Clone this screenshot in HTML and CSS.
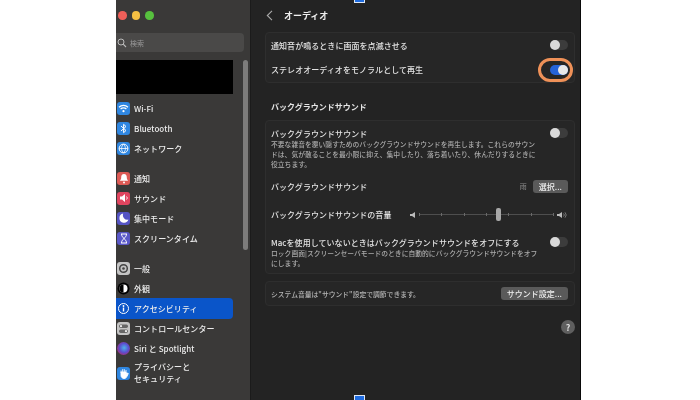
FILE: index.html
```html
<!DOCTYPE html>
<html lang="ja">
<head>
<meta charset="utf-8">
<title>オーディオ</title>
<link rel="stylesheet" href="styles.css">
</head>
<body>
<div class="window">
  <aside class="sidebar">
    <div class="lights"><span class="light red"></span><span class="light yellow"></span><span class="light green"></span></div>
    <div class="search">
      <svg class="search-icon" width="10" height="10" viewBox="0 0 10 10"><circle cx="4" cy="4" r="3" fill="none" stroke="#bbb" stroke-width="1"/><path d="M6.2 6.2L9 9" stroke="#bbb" stroke-width="1.1"/></svg>
      <span>検索</span>
    </div>
    <div class="account"></div>
    <div class="scroll-thumb"></div>
    <nav class="nav">
      <div class="group">
        <div class="item"><span class="icon blue"><svg width="11" height="9" viewBox="0 0 11 9"><path d="M1 3.2a6.4 6.4 0 0 1 9 0M2.6 5a4.1 4.1 0 0 1 5.8 0" fill="none" stroke="#fff" stroke-width="1.2"/><circle cx="5.5" cy="7.2" r="1.1" fill="#fff"/></svg></span>Wi-Fi</div>
        <div class="item"><span class="icon blue"><svg width="8" height="11" viewBox="0 0 8 11"><path d="M1 3l5 4.500-2.400 2.200V1.300L6 3.500 1 8" fill="none" stroke="#fff" stroke-width="1"/></svg></span>Bluetooth</div>
        <div class="item"><span class="icon blue"><svg width="11" height="11" viewBox="0 0 11 11"><circle cx="5.500" cy="5.500" r="4.400" fill="none" stroke="#fff" stroke-width="1"/><path d="M1.200 5.500h8.600M5.500 1.100c-2.600 2.600-2.600 6.200 0 8.800M5.500 1.100c2.600 2.600 2.600 6.200 0 8.800" fill="none" stroke="#fff" stroke-width=".8"/></svg></span>ネットワーク</div>
      </div>
      <div class="group">
        <div class="item"><span class="icon red-icon"><svg width="10" height="11" viewBox="0 0 10 11"><path d="M5 1c2 0 2.800 1.600 2.800 3.400 0 1.800.8 2.600 1.400 3.400H.8c.6-.8 1.400-1.600 1.400-3.400C2.200 2.600 3 1 5 1z" fill="#fff"/><circle cx="5" cy="9.400" r="1" fill="#fff"/></svg></span>通知</div>
        <div class="item"><span class="icon pink"><svg width="10" height="10" viewBox="0 0 10 10"><path d="M1 3.500h2L6 1v8L3 6.500H1z" fill="#fff"/><path d="M7.500 3.500a2 2 0 0 1 0 3" fill="none" stroke="#fff" stroke-width=".9"/></svg></span>サウンド</div>
        <div class="item"><span class="icon indigo"><svg width="10" height="10" viewBox="0 0 10 10"><path d="M4.200 .6a4.600 4.600 0 1 0 5.200 6A4.500 4.500 0 0 1 4.200 .6z" fill="#fff"/></svg></span>集中モード</div>
        <div class="item"><span class="icon violet"><svg width="8" height="11" viewBox="0 0 8 11"><path d="M1 1h6M1 10h6M1.500 1c0 3 2 3 2 4.500S1.500 7 1.500 10M6.500 1c0 3-2 3-2 4.500S6.500 7 6.500 10" fill="none" stroke="#fff" stroke-width="1"/></svg></span>スクリーンタイム</div>
      </div>
      <div class="group">
        <div class="item"><span class="icon gray"><svg width="11" height="11" viewBox="0 0 11 11"><circle cx="5.500" cy="5.500" r="3.800" fill="none" stroke="#444" stroke-width="1.500"/><circle cx="5.500" cy="5.500" r="1.300" fill="#444"/></svg></span>一般</div>
        <div class="item"><span class="icon round-dark"><svg width="13" height="13" viewBox="0 0 13 13"><circle cx="6.500" cy="6.500" r="6" fill="#000"/><circle cx="6.500" cy="6.500" r="4" fill="#fff"/><path d="M6.500 2.500a4 4 0 0 0 0 8z" fill="#000"/></svg></span>外観</div>
        <div class="item active"><span class="icon blue"><svg width="13" height="13" viewBox="0 0 13 13"><circle cx="6.500" cy="6.500" r="5" fill="none" stroke="#fff" stroke-width="1"/><circle cx="6.500" cy="4" r=".9" fill="#fff"/><path d="M6.500 5.500v4" stroke="#fff" stroke-width="1.400"/></svg></span>アクセシビリティ</div>
        <div class="item"><span class="icon gray"><svg width="11" height="11" viewBox="0 0 11 11"><rect x="1" y="1.500" width="9" height="3.500" rx="1.700" fill="#666"/><rect x="1" y="6.500" width="9" height="3.500" rx="1.700" fill="#666"/><circle cx="3" cy="3.200" r="1.100" fill="#eee"/><circle cx="8" cy="8.200" r="1.100" fill="#eee"/></svg></span>コントロールセンター</div>
        <div class="item"><span class="icon siri"></span>Siri と Spotlight</div>
        <div class="item tall"><span class="icon blue"><svg width="10" height="11" viewBox="0 0 10 11"><path d="M2 5V2.500M3.700 4.500V1.200M5.300 4.500V1.200M7 5V2M2 4.500v3C2 9.200 3.500 10.500 5 10.500c1.800 0 2.500-1 3-2.200L9.300 5.500 7.800 5 7 6.500V4H2z" fill="#fff" stroke="#fff" stroke-width=".9"/></svg></span><span class="two-line">プライバシーと<br>セキュリティ</span></div>
      </div>
    </nav>
  </aside>
  <main class="main">
    <header class="head">
      <svg width="7" height="11" viewBox="0 0 7 11"><path d="M6 .8L1.300 5.500 6 10.200" fill="none" stroke="#aaa" stroke-width="1.100"/></svg>
      <h1>オーディオ</h1>
    </header>
    <section class="card">
      <div class="row first"><span class="label">通知音が鳴るときに画面を点滅させる</span><span class="switch"></span></div>
      <div class="row second"><span class="label">ステレオオーディオをモノラルとして再生</span><span class="switch on"></span><span class="ring"></span></div>
    </section>
    <h2 class="section-title">バックグラウンドサウンド</h2>
    <section class="card">
      <div class="block">
        <div class="block-head"><span class="label">バックグラウンドサウンド</span><span class="switch"></span></div>
        <p class="desc">不要な雑音を覆い隠すためのバックグラウンドサウンドを再生します。これらのサウン<br>ドは、気が散ることを最小限に抑え、集中したり、落ち着いたり、休んだりするときに<br>役立ちます。</p>
      </div>
      <div class="row choose"><span class="label">バックグラウンドサウンド</span><span class="choose-right"><span class="value">雨</span><span class="btn small">選択...</span></span></div>
      <div class="row volume">
        <span class="label">バックグラウンドサウンドの音量</span>
        <span class="slider">
          <svg width="8" height="8" viewBox="0 0 8 8"><path d="M1 3h2l3-2v6L3 5H1z" fill="#bbb"/></svg>
          <span class="track"><span class="tick"></span><span class="tick"></span><span class="tick"></span><span class="tick"></span><span class="tick"></span><span class="tick"></span><span class="tick"></span><span class="knob"></span></span>
          <svg width="12" height="8" viewBox="0 0 12 8"><path d="M1 3h2l3-2v6L3 5H1z" fill="#bbb"/><path d="M7.500 2.500a2 2 0 0 1 0 3M9 1.300a4 4 0 0 1 0 5.400" fill="none" stroke="#999" stroke-width=".7"/></svg>
        </span>
      </div>
      <div class="block last">
        <div class="block-head"><span class="label">Macを使用していないときはバックグラウンドサウンドをオフにする</span><span class="switch"></span></div>
        <p class="desc">ロック画面|スクリーンセーバモードのときに自動的にバックグラウンドサウンドをオフ<br>にします。</p>
      </div>
    </section>
    <section class="card note">
      <span class="note-text">システム音量は"サウンド"設定で調節できます。</span>
      <span class="btn">サウンド設定...</span>
    </section>
    <div class="help-row"><span class="help">?</span></div>
  </main>
  <span class="marker top"></span>
  <span class="marker bottom"></span>
</div>
</body>
</html>
```
FILE: styles.css
```css
* { box-sizing: border-box; }
html, body { margin: 0; height: 100%; background: #fff; overflow: hidden; }
body { font-family: "Noto Sans CJK JP", "Liberation Sans", sans-serif; color: #e6e6e6; }
.window { position: relative; display: flex; width: 465px; height: 400px; margin-left: 116px; background: #232323; border-right: 1px solid #0a0a0a; filter: blur(.4px); }

.sidebar { position: relative; flex: none; width: 135px; background: #3a3938; border-right: 1px solid #1b1b1b; }
.lights { display: flex; gap: 5px; padding: 11px 0 0 2px; height: 33px; }
.light { width: 8.500px; height: 8.500px; border-radius: 50%; }
.red { background: #ee5f59; }
.yellow { background: #f5bf43; }
.green { background: #57c03e; }
.search { display: flex; align-items: center; gap: 3px; width: 128px; height: 19px; background: #4a4948; border-radius: 0 4px 4px 0; font-size: 7px; color: #9a9a9a; }
.search-icon { margin-left: 1px; }
.account { width: 117px; height: 34px; margin-top: 8px; background: #000; }
.scroll-thumb { position: absolute; left: 127px; top: 60px; width: 5px; height: 190px; border-radius: 3px; background: #7d7c7b; }
.nav { margin-top: 4px; }
.group { margin-bottom: 9.400px; }
.item { display: flex; align-items: center; gap: 4px; width: 117px; height: 20.200px; font-size: 8px; font-weight: 500; letter-spacing: .05px; white-space: nowrap; color: #ececec; }
.item.active { background: #0a55c9; border-radius: 0 4px 4px 0; height: 21px; margin: -.4px 0; }
.item.tall { height: 28px; line-height: 12px; }
.icon { flex: none; display: flex; align-items: center; justify-content: center; width: 13px; height: 13px; border-radius: 3px; margin-left: 1px; }
.blue { background: #2f86e0; }
.red-icon { background: #dd5a55; }
.pink { background: #e0455f; }
.indigo { background: #5554c4; }
.violet { background: #5a58c8; }
.gray { background: #c4c4c4; }
.round-dark { background: transparent; }
.active .icon { background: transparent; }
.siri { border-radius: 50%; background: radial-gradient(circle at 55% 45%, #4fb2e8 0, #5a4fd0 45%, #a0307c 75%, #222 100%); }

.main { flex: 1; padding: 8px 5px 0 14px; min-width: 0; }
.head { display: flex; align-items: center; gap: 11px; height: 14px; padding-left: 1px; }
.head h1 { margin: 0; font-size: 9px; font-weight: 700; letter-spacing: 0; color: #eee; }
.card { border: 1px solid #2e2e2e; border-radius: 4px; background: #262626; }
.head + .card { margin-top: 10px; }
.row { position: relative; display: flex; align-items: center; justify-content: space-between; padding: 0 6px 0 5px; }
.first { height: 24px; }
.second { height: 25px; }
.label { font-size: 8px; font-weight: 500; letter-spacing: .05px; color: #e2e2e2; white-space: nowrap; }
.switch { position: relative; flex: none; width: 18px; height: 10px; border-radius: 5px; background: #3c3c3c; }
.switch::after { content: ""; position: absolute; left: 0; top: 0; width: 10px; height: 10px; border-radius: 50%; background: #d9d9d9; }
.switch.on { background: #2563d8; }
.switch.on::after { left: 8px; background: #e8e8e8; }
.ring { position: absolute; right: 1px; top: 1px; width: 35px; height: 24px; border: 3px solid #ef9158; border-radius: 12px; }
.section-title { margin: 18px 0 7px 6px; height: 12px; font-size: 8px; line-height: 12px; font-weight: 700; color: #e4e4e4; }
.block { padding: 6px 6px 0 5px; }
.block-head { display: flex; align-items: center; justify-content: space-between; height: 12px; }
.desc { margin: 0; font-size: 6.800px; line-height: 10px; font-weight: 500; white-space: nowrap; color: #aaa; }
.choose { height: 26px; margin-top: 4px; }
.choose-right { display: flex; align-items: center; gap: 6px; }
.value { font-size: 7px; color: #8c8c8c; }
.btn { display: inline-flex; align-items: center; justify-content: center; height: 13px; padding: 0 6px; border-radius: 3px; background: #5a5a5a; font-size: 8px; font-weight: 500; color: #eee; white-space: nowrap; }
.volume { height: 31px; }
.slider { display: flex; align-items: center; gap: 2px; width: 159px; }
.track { position: relative; display: flex; flex: 1; align-items: center; justify-content: space-between; height: 1px; background: #4e4e4e; }
.tick { width: 1px; height: 3px; background: #6a6a6a; }
.knob { position: absolute; left: 77px; top: -6px; width: 5px; height: 13px; border-radius: 2px; background: #a8a8a8; }
.last { height: 43px; }
.note { display: flex; align-items: center; justify-content: space-between; height: 25px; margin-top: 7px; padding: 0 6px 0 5px; }
.note-text { font-size: 6.800px; font-weight: 500; color: #b5b5b5; }
.help-row { display: flex; justify-content: flex-end; margin-top: 14px; }
.help { display: flex; align-items: center; justify-content: center; width: 14px; height: 14px; border-radius: 50%; background: #5f5f5f; font-size: 9px; font-weight: 700; color: #ddd; }
.marker { position: absolute; left: 238px; width: 11px; background: #1f6ce0; border: 1px solid #dfe8f5; }
.marker.top { top: -2px; height: 5px; }
.marker.bottom { bottom: -2px; height: 7px; }
```
